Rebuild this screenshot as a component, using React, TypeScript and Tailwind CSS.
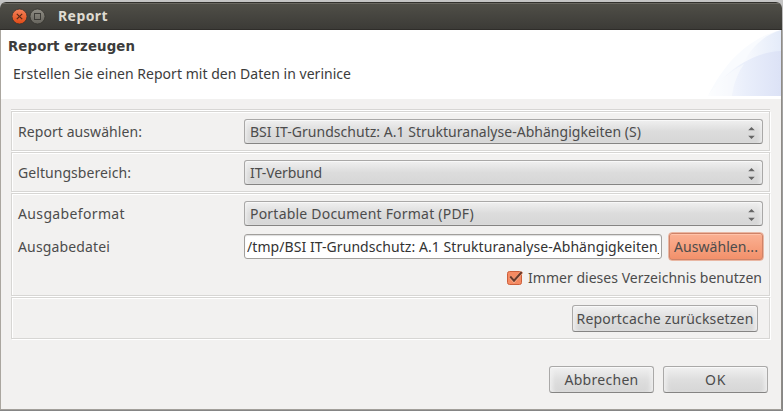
import { useLayoutEffect, useRef } from "react";
import type { ReactNode } from "react";
import clsx from "clsx";

/* Text whose tracking is adjusted so that the line takes the given width. */
function FitText({ children, width, className }: { children: string; width: number; className?: string }) {
  const ref = useRef<HTMLSpanElement>(null);
  useLayoutEffect(() => {
    const el = ref.current;
    if (!el) return;
    el.style.letterSpacing = "0px";
    const natural = el.getBoundingClientRect().width;
    el.style.letterSpacing = `${(width - natural) / children.length}px`;
  }, [children, width]);
  return (
    <span ref={ref} className={clsx("inline-block whitespace-pre", className)}>
      {children}
    </span>
  );
}

function Panel({ children, className }: { children: ReactNode; className: string }) {
  return (
    <div
      className={clsx(
        "mb-px w-[759px] border border-[#d7d6d4] pl-[6px] shadow-[inset_1px_1px_0_#fff,1px_1px_0_#fff]",
        className,
      )}
    >
      {children}
    </div>
  );
}

function Label({ children, width }: { children: string; width: number }) {
  return (
    <div className="flex w-[226px] items-center">
      <FitText width={width}>{children}</FitText>
    </div>
  );
}

function Combo({ children, width }: { children: string; width: number }) {
  return (
    <div className="flex h-[25px] w-[519px] items-center justify-between rounded-[3px] border border-[#a9a8a7] border-b-[#858483] bg-linear-to-b from-[#f0f0f0] via-[#dcdcdc] via-50% to-[#d6d6d6] pr-[7px] pl-[5px] shadow-[inset_0_1px_0_#f8f8f8,inset_4px_0_4px_-3px_#f4f4f4,inset_-4px_0_4px_-3px_#f4f4f4]">
      <FitText width={width}>{children}</FitText>
      <svg width="7" height="12" viewBox="0 0 7 12" className="mt-[2px] fill-[#656565]">
        <path d="M3.5 0 6.8 3.2H.2zM3.5 12 .2 8.8h6.6z" />
      </svg>
    </div>
  );
}

function Button({ children, width, className }: { children: string; width: number; className: string }) {
  return (
    <button
      className={clsx(
        "flex h-[27px] items-center justify-center rounded-[3px] border border-[#aaa9a8] border-b-[#858483] bg-linear-to-b from-[#f1f1f1] via-[#dedede] via-50% to-[#d6d6d6] shadow-[inset_0_1px_0_#f9f9f9,inset_5px_0_5px_-3px_#f2f2f2,inset_-5px_0_5px_-3px_#f2f2f2]",
        className,
      )}
    >
      <FitText width={width}>{children}</FitText>
    </button>
  );
}

export default function App() {
  return (
    <div className="h-[411px] w-[783px] overflow-hidden bg-linear-to-b from-[#c5c5c5] via-[#aaaaaa] via-10% to-[#858585] pt-[2px] font-['Noto_Sans','Open_Sans',sans-serif] text-[14px] leading-[20px] text-[#4c4c4c]">
      <div className="flex h-[408px] w-[782px] flex-col overflow-hidden rounded-t-[6px] border-b border-[#a29f9a] bg-[#f2f1f0]">
        <header className="flex h-7 shrink-0 items-center border-t border-b border-t-[#32312d] border-b-[#2f2d2a] bg-linear-to-b from-[#504f48] to-[#3c3b37] pl-[12px] shadow-[inset_0_1px_0_#6a6861]">
          <svg width="34" height="18" viewBox="0 0 34 18">
            <defs>
              <linearGradient id="close" x1="0" y1="0" x2="0" y2="1">
                <stop offset="0" stopColor="#f5825a" />
                <stop offset="1" stopColor="#df4a16" />
              </linearGradient>
              <linearGradient id="max" x1="0" y1="0" x2="0" y2="1">
                <stop offset="0" stopColor="#8e8c84" />
                <stop offset="1" stopColor="#66645d" />
              </linearGradient>
            </defs>
            <circle cx="7.5" cy="9.5" r="7.5" fill="url(#close)" stroke="#35332f" strokeWidth=".8" />
            <path d="m4.8 6.8 5.4 5.4m0-5.4-5.4 5.4" stroke="#5a2a17" strokeWidth="1.2" />
            <circle cx="25.5" cy="9.5" r="7.5" fill="url(#max)" stroke="#35332f" strokeWidth=".8" />
            <rect x="22.5" y="6.5" width="6" height="6" fill="none" stroke="#3c3b37" strokeWidth="1" />
          </svg>
          <FitText width={50} className="ml-[12px] font-bold text-[#dfdbd2]">Report</FitText>
        </header>
        <div className="flex min-h-0 grow flex-col border-r border-l border-r-[#8f8c87] border-l-[#aaa69f]">
          <section className="flex h-[69px] shrink-0 justify-between bg-white">
            <div className="flex flex-col items-start pt-[7px] pl-[7px] text-[#3c3c3c]">
              <FitText width={127} className="font-['DejaVu_Sans',sans-serif] text-[13.33px] font-bold">Report erzeugen</FitText>
              <FitText width={338} className="mt-[7px] ml-[5px]">Erstellen Sie einen Report mit den Daten in verinice</FitText>
            </div>
            <svg width="74" height="66" viewBox="0 0 74 66">
              <defs>
                <linearGradient id="arc" x1="0" y1="0" x2="1" y2="0">
                  <stop offset="0" stopColor="#fff" />
                  <stop offset="1" stopColor="#e4ebf9" />
                </linearGradient>
                <linearGradient id="hill" x1="0" y1="0" x2="1" y2="0">
                  <stop offset="0" stopColor="#fff" />
                  <stop offset=".5" stopColor="#eaeffb" />
                  <stop offset="1" stopColor="#dce2f6" />
                </linearGradient>
              </defs>
              <path d="M1 66C16 35 40 8 74 0v66z" fill="#f9fbfe" />
              <path d="M25 66C30 35 48 7 74 0v66z" fill="url(#arc)" />
              <path d="M1 66C18 41 46 22 74 21v45z" fill="url(#hill)" />
              <path d="M25 66C27 52 31 43 37 34 20 43 9 54 1 66z" fill="#fafbfe" opacity=".6" />
            </svg>
          </section>
          <main className="flex grow flex-col pt-[10px] pl-[10px]">
            <div className="mb-px h-px w-[759px] shrink-0 bg-[#d7d6d4] shadow-[0_1px_0_#fff]" />
            <Panel className="flex h-[40px] items-center pt-px">
              <Label width={124}>Report auswählen:</Label>
              <Combo width={391}>BSI IT-Grundschutz: A.1 Strukturanalyse-Abhängigkeiten (S)</Combo>
            </Panel>
            <Panel className="flex h-[40px] items-center pt-px">
              <Label width={113}>Geltungsbereich:</Label>
              <Combo width={72}>IT-Verbund</Combo>
            </Panel>
            <Panel className="h-[103px] pt-[7px]">
              <div className="flex">
                <Label width={107}>Ausgabeformat</Label>
                <Combo width={224}>Portable Document Format (PDF)</Combo>
              </div>
              <div className="mt-[6px] flex h-[29px] items-center">
                <Label width={92}>Ausgabedatei</Label>
                <div className="flex h-[25px] w-[418px] items-center rounded-[3px] border border-[#a19f9c] bg-white px-[2px] text-[#333] shadow-[inset_0_1px_1px_#ddd]">
                  <div className="flex w-full overflow-hidden">
                    <FitText width={417} className="shrink-0">/tmp/BSI IT-Grundschutz: A.1 Strukturanalyse-Abhängigkeiten_</FitText>
                  </div>
                </div>
                <button className="ml-[6px] flex h-[29px] w-[96px] items-center justify-center rounded-[4px] border border-[#e9b7a3] bg-linear-to-b from-[#fbb294] to-[#f28f69] shadow-[inset_0_0_0_1px_#cf8368,inset_0_2px_0_#ffc3aa]">
                  <FitText width={84}>Auswählen...</FitText>
                </button>
              </div>
              <div className="mt-[7px] flex h-[20px] items-center pl-[488px]">
                <svg width="18" height="18" viewBox="0 0 18 18">
                  <rect x="1.5" y="2.5" width="14" height="13" rx="2" fill="#f58a62" stroke="#cc5f3b" />
                  <path d="M4 7.5 8 12 16 3" fill="none" stroke="#fbb08f" strokeWidth="3.2" />
                  <path d="M4.2 7.5 8 11.7 15.8 3" fill="none" stroke="#693a2b" strokeWidth="2.1" />
                </svg>
                <FitText width={234} className="ml-[4px]">Immer dieses Verzeichnis benutzen</FitText>
              </div>
            </Panel>
            <Panel className="flex h-[42px] items-center justify-end pt-px pr-[11px]">
              <Button width={177} className="w-[186px]">Reportcache zurücksetzen</Button>
            </Panel>
            <div className="mt-[26px] flex justify-end gap-[9px] pr-[13px]">
              <Button width={74} className="w-[105px]">Abbrechen</Button>
              <Button width={21} className="w-[105px]">OK</Button>
            </div>
          </main>
        </div>
      </div>
    </div>
  );
}
